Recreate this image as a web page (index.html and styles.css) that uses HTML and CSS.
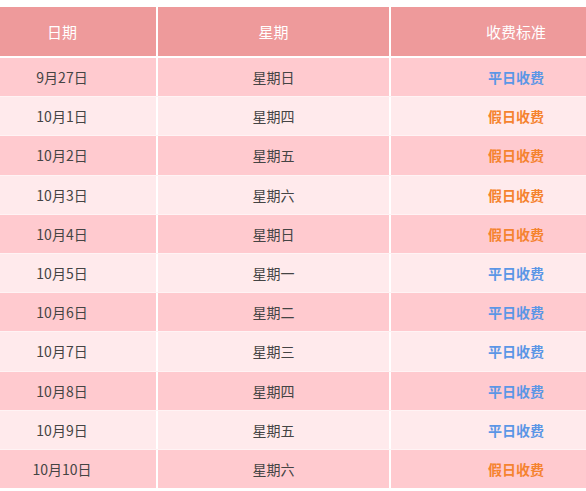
FILE: index.html
```html
<!DOCTYPE html>
<html lang="zh-CN">
<head>
<meta charset="utf-8">
<title>收费标准</title>
<link rel="stylesheet" href="styles.css">
</head>
<body>
<div class="table" role="table">
  <div class="head" role="row">
    <div class="c c1" role="columnheader">日期</div>
    <div class="c c2" role="columnheader">星期</div>
    <div class="c c3" role="columnheader">收费标准</div>
  </div>
  <div class="body">
    <div class="row odd" role="row"><div class="c c1">9月27日</div><div class="c c2">星期日</div><div class="c c3 weekday">平日收费</div></div>
    <div class="row even" role="row"><div class="c c1">10月1日</div><div class="c c2">星期四</div><div class="c c3 holiday">假日收费</div></div>
    <div class="row odd" role="row"><div class="c c1">10月2日</div><div class="c c2">星期五</div><div class="c c3 holiday">假日收费</div></div>
    <div class="row even" role="row"><div class="c c1">10月3日</div><div class="c c2">星期六</div><div class="c c3 holiday">假日收费</div></div>
    <div class="row odd" role="row"><div class="c c1">10月4日</div><div class="c c2">星期日</div><div class="c c3 holiday">假日收费</div></div>
    <div class="row even" role="row"><div class="c c1">10月5日</div><div class="c c2">星期一</div><div class="c c3 weekday">平日收费</div></div>
    <div class="row odd" role="row"><div class="c c1">10月6日</div><div class="c c2">星期二</div><div class="c c3 weekday">平日收费</div></div>
    <div class="row even" role="row"><div class="c c1">10月7日</div><div class="c c2">星期三</div><div class="c c3 weekday">平日收费</div></div>
    <div class="row odd" role="row"><div class="c c1">10月8日</div><div class="c c2">星期四</div><div class="c c3 weekday">平日收费</div></div>
    <div class="row even" role="row"><div class="c c1">10月9日</div><div class="c c2">星期五</div><div class="c c3 weekday">平日收费</div></div>
    <div class="row odd" role="row"><div class="c c1">10月10日</div><div class="c c2">星期六</div><div class="c c3 holiday">假日收费</div></div>
  </div>
</div>
</body>
</html>
```

FILE: styles.css
```css
html, body {
  margin: 0;
  padding: 0;
  background: #ffffff;
}
body {
  padding-top: 7px;
  font-family: "Noto Sans CJK SC", "Noto Sans", sans-serif;
  width: 586px;
  overflow: hidden;
}
.table {
  display: flex;
  flex-direction: column;
  gap: 2px;
}
.head, .row {
  display: grid;
  grid-template-columns: 156px 231px 1fr;
  column-gap: 2px;
}
.head .c {
  height: 49px;
  background: #ee9a9b;
  color: #ffffff;
  font-size: 15px;
}
.body {
  display: flex;
  flex-direction: column;
  gap: 1px;
}
.row {
  background: #ffffff;
}
.c {
  display: flex;
  align-items: center;
  justify-content: center;
  font-size: 14px;
  color: #444444;
}
.row .c {
  height: 38.2px;
}
.c1 {
  padding-right: 32px;
}
.c3 {
  padding-left: 55px;
}
.odd .c {
  background: #ffcacf;
}
.even .c {
  background: #ffeaec;
}
.body .row + .row {
  box-shadow: 0 -1px 0 #fff3f4;
}
.weekday {
  color: #5b96e6 !important;
  font-weight: bold;
}
.holiday {
  color: #f5832f !important;
  font-weight: bold;
}
```
